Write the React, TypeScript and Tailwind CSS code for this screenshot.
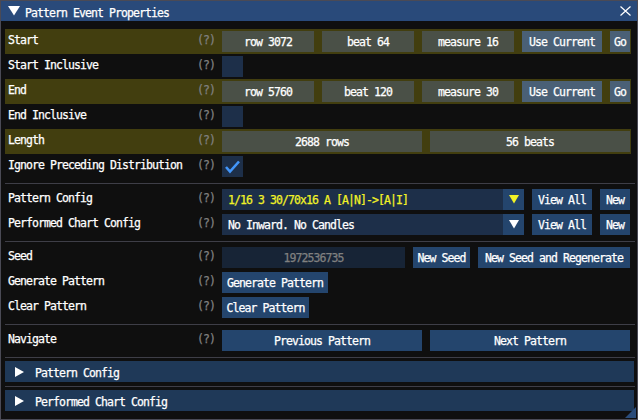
import React from 'react'

const OLIVE = 'bg-[#423e0f]'

function Help() {
  return <div className="w-[18px] h-[21px] leading-[22px] text-[#808080] shrink-0">(?)</div>
}

function Row({ label, hl, children }: { label: string; hl?: boolean; children?: React.ReactNode }) {
  return (
    <div className={`flex h-[25px] w-[626px] ${hl ? OLIVE : ''}`}>
      <div className="w-[192px] pl-[3px] h-[21px] leading-[22px] whitespace-nowrap shrink-0">{label}</div>
      <Help />
      <div className="ml-[7px] pt-[2px] flex gap-[8px] w-[408px]">{children}</div>
    </div>
  )
}

function Frame({ w, cls, children, left }: { w: string; cls: string; children?: React.ReactNode; left?: boolean }) {
  return (
    <div className={`${w} h-[21px] leading-[23px] whitespace-nowrap overflow-hidden shrink-0 ${cls} ${left ? 'pl-[6px]' : 'text-center'}`}>
      {children}
    </div>
  )
}

function Sep() {
  return (
    <div className="h-[8px] flex items-center">
      <div className="h-px w-[630px] bg-[#3e3e47]" />
    </div>
  )
}

function Combo({ text, yellow }: { text: string; yellow?: boolean }) {
  return (
    <div className="flex w-[302px] h-[21px] bg-[#1d2f49] shrink-0">
      <div className={`flex-1 pl-[6px] leading-[23px] whitespace-nowrap overflow-hidden ${yellow ? 'text-[#f2f226]' : 'text-white'}`}>{text}</div>
      <div className="w-[21px] h-[21px] bg-[#24456d] flex items-center justify-center">
        <svg width="10" height="9" viewBox="0 0 10 9">
          <polygon points="0,0 10,0 5,8.5" fill={yellow ? '#f2f226' : '#ffffff'} />
        </svg>
      </div>
    </div>
  )
}

function Header({ text }: { text: string }) {
  return (
    <div className="flex items-center h-[21px] w-[629px] bg-[#1f3958]">
      <svg className="ml-[10px]" width="10" height="10" viewBox="0 0 10 10">
        <polygon points="0,0 9,5 0,10" fill="#ffffff" />
      </svg>
      <div className="ml-[10px] leading-[24px] h-[21px]">{text}</div>
    </div>
  )
}

export default function App() {
  const gray = 'bg-[#4a5047]'
  const btn = 'bg-[#24456d]'
  return (
    <div
      className="relative w-[638px] h-[420px] bg-[#0f0f0f] border border-[#4a4a55] text-white text-[11.5px] tracking-[-0.92px] [-webkit-text-stroke:0.25px_currentcolor] overflow-hidden"
      style={{ fontFamily: '"DejaVu Sans Mono", monospace' }}
    >
      <div className="flex items-center h-[20px] bg-[#294a7a]">
        <svg className="ml-[7px]" width="12" height="10" viewBox="0 0 12 10">
          <polygon points="0,0 12,0 6,9.5" fill="#ffffff" />
        </svg>
        <div className="ml-[5px] leading-[25px] h-[20px]">Pattern Event Properties</div>
        <svg className="ml-auto mr-[6px]" width="11" height="10" viewBox="0 0 11 10">
          <path d="M0.5 0.5 L10.5 9.5 M10.5 0.5 L0.5 9.5" stroke="#ffffff" strokeWidth="1.2" />
        </svg>
      </div>

      <div className="pl-[4px] pt-[8px] flex flex-col">
        <Row label="Start" hl>
          <Frame w="w-[92px]" cls={gray}>row 3072</Frame>
          <Frame w="w-[92px]" cls={gray}>beat 64</Frame>
          <Frame w="w-[92px]" cls={gray}>measure 16</Frame>
          <Frame w="w-[80px]" cls="bg-[#4a6076]">Use Current</Frame>
          <Frame w="w-[20px]" cls="bg-[#4a6076]">Go</Frame>
        </Row>
        <Row label="Start Inclusive">
          <div className="w-[21px] h-[21px] bg-[#1d2f49]" />
        </Row>
        <Row label="End" hl>
          <Frame w="w-[92px]" cls={gray}>row 5760</Frame>
          <Frame w="w-[92px]" cls={gray}>beat 120</Frame>
          <Frame w="w-[92px]" cls={gray}>measure 30</Frame>
          <Frame w="w-[80px]" cls="bg-[#4a6076]">Use Current</Frame>
          <Frame w="w-[20px]" cls="bg-[#4a6076]">Go</Frame>
        </Row>
        <Row label="End Inclusive">
          <div className="w-[21px] h-[21px] bg-[#1d2f49]" />
        </Row>
        <Row label="Length" hl>
          <Frame w="w-[200px]" cls={gray}>2688 rows</Frame>
          <Frame w="w-[200px]" cls={gray}>56 beats</Frame>
        </Row>
        <Row label="Ignore Preceding Distribution">
          <div className="w-[21px] h-[21px] bg-[#1d2f49] flex items-center justify-center">
            <svg width="21" height="21" viewBox="0 0 21 21">
              <polyline points="4,11 8,15.5 17,5.5" fill="none" stroke="#4296fa" strokeWidth="2.6" />
            </svg>
          </div>
        </Row>

        <Sep />

        <Row label="Pattern Config">
          <Combo text="1/16 3 30/70x16 A [A|N]->[A|I]" yellow />
          <Frame w="w-[60px]" cls={btn}>View All</Frame>
          <Frame w="w-[30px]" cls={btn}>New</Frame>
        </Row>
        <Row label="Performed Chart Config">
          <Combo text="No Inward. No Candles" />
          <Frame w="w-[60px]" cls={btn}>View All</Frame>
          <Frame w="w-[30px]" cls={btn}>New</Frame>
        </Row>

        <Sep />

        <Row label="Seed">
          <Frame w="w-[183px]" cls="bg-[#172436] text-[#808080]">1972536735</Frame>
          <Frame w="w-[57px]" cls={btn}>New Seed</Frame>
          <Frame w="w-[152px]" cls={btn}>New Seed and Regenerate</Frame>
        </Row>
        <Row label="Generate Pattern">
          <Frame w="w-[106px]" cls={btn}>Generate Pattern</Frame>
        </Row>
        <Row label="Clear Pattern">
          <Frame w="w-[87px]" cls={btn}>Clear Pattern</Frame>
        </Row>

        <Sep />

        <Row label="Navigate">
          <Frame w="w-[200px]" cls={btn}>Previous Pattern</Frame>
          <Frame w="w-[200px]" cls={btn}>Next Pattern</Frame>
        </Row>

        <Sep />
        <Header text="Pattern Config" />
        <Sep />
        <Header text="Performed Chart Config" />
      </div>

      <svg className="absolute right-[1px] bottom-[1px]" width="11" height="11" viewBox="0 0 11 11">
        <polygon points="11,0 11,11 0,11" fill="#2a4c7a" />
      </svg>
    </div>
  )
}
